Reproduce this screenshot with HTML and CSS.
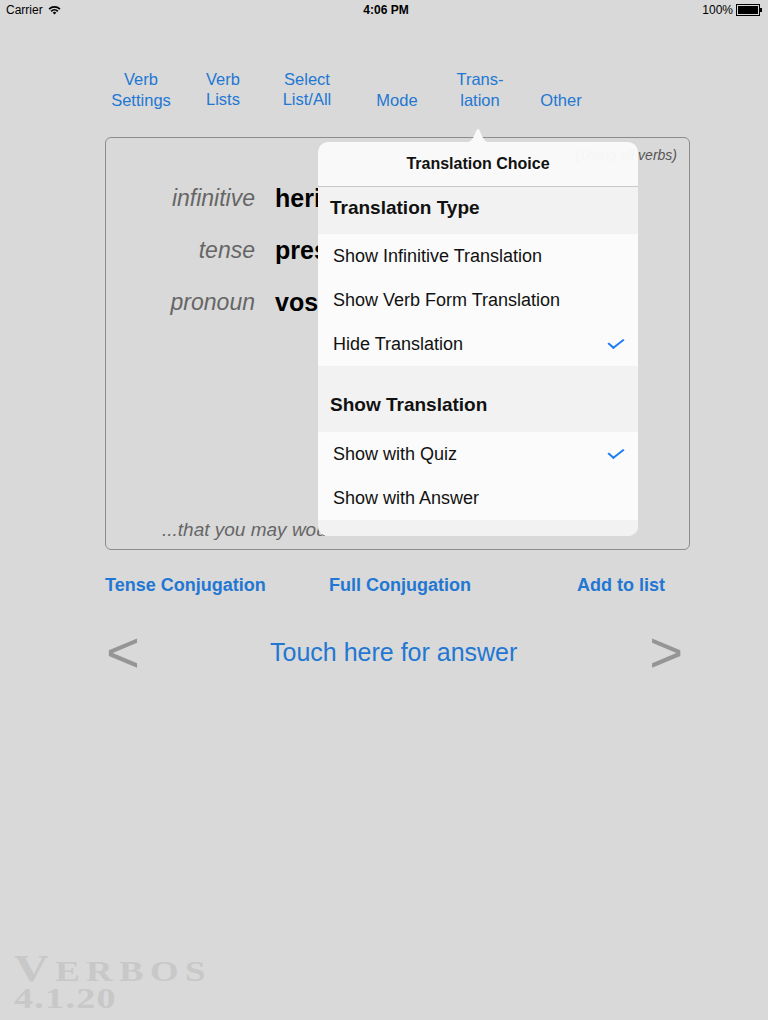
FILE: index.html
```html
<html lang="en">
<head>
    <meta charset="UTF-8">
    <meta name="viewport" content="width=device-width, initial-scale=1.0">
    <title>Verbos</title>
    <link rel="stylesheet" href="styles.css">
</head>
<body>
    <div class="screen">
        <!-- iOS status bar -->
        <div class="status-bar">
            <div class="status-left">
                Carrier
                <svg class="wifi" width="13" height="10" viewBox="0 0 13 10">
                    <path d="M0.5 3.6 A8.5 8.5 0 0 1 12.5 3.6 L11.3 4.8 A6.8 6.8 0 0 0 1.7 4.8 Z" fill="#000"/>
                    <path d="M2.6 5.7 A5.5 5.5 0 0 1 10.4 5.7 L9.2 6.9 A3.8 3.8 0 0 0 3.8 6.9 Z" fill="#000"/>
                    <path d="M4.7 7.8 A2.5 2.5 0 0 1 8.3 7.8 L6.5 9.6 Z" fill="#000"/>
                </svg>
            </div>
            <div class="status-time">4:06 PM</div>
            <div class="status-right">
                100%
                <span class="battery"><span class="battery-fill"></span></span>
                <span class="battery-tip"></span>
            </div>
        </div>

        <!-- Top menu -->
        <nav class="top-menu">
            <a class="menu-item">Verb<br>Settings</a>
            <a class="menu-item menu-item-up">Verb<br>Lists</a>
            <a class="menu-item menu-item-up">Select<br>List/All</a>
            <a class="menu-item">Mode</a>
            <a class="menu-item">Trans-<br>lation</a>
            <a class="menu-item">Other</a>
        </nav>

        <!-- Quiz card -->
        <div class="quiz-card">
            <div class="verb-scope">(Using all verbs)</div>
            <div class="quiz-grid">
                <span class="quiz-label">infinitive</span>
                <span class="quiz-value">herir</span>
                <span class="quiz-label">tense</span>
                <span class="quiz-value">presente de subjuntivo</span>
                <span class="quiz-label">pronoun</span>
                <span class="quiz-value">vosotros</span>
            </div>
            <div class="quiz-hint">...that you may wound</div>
        </div>

        <div class="action-links">
            <a class="action-link">Tense Conjugation</a>
            <a class="action-link">Full Conjugation</a>
            <a class="action-link">Add to list</a>
        </div>

        <div class="answer-row">
            <span class="nav-arrow">&lt;</span>
            <a class="answer-link">Touch here for answer</a>
            <span class="nav-arrow">&gt;</span>
        </div>

        <div class="app-logo">
            <div class="logo-name"><span class="logo-initial">V</span>ERBOS</div>
            <div class="logo-version">4.1.20</div>
        </div>

        <!-- Translation popover -->
        <div class="popover">
            <svg class="popover-arrow" width="30" height="15" viewBox="0 0 30 15">
                <path d="M0 15 C7 15 10 12 13 3 Q15 -1 17 3 C20 12 23 15 30 15 Z" fill="#f8f9f8"/>
            </svg>
            <div class="popover-title">Translation Choice</div>
            <div class="section-header">Translation Type</div>
            <div class="option-row">Show Infinitive Translation</div>
            <div class="option-row">Show Verb Form Translation</div>
            <div class="option-row">Hide Translation <span class="check"></span></div>
            <div class="section-header section-header-tall">Show Translation</div>
            <div class="option-row">Show with Quiz <span class="check"></span></div>
            <div class="option-row">Show with Answer</div>
            <div class="popover-foot"></div>
        </div>
    </div>
</body>
</html>
```

FILE: styles.css
```css
body {
    margin: 0;
    padding: 0;
    background-color: #d9d9d9;
    font-family: "Liberation Sans", Arial, sans-serif;
}

a {
    color: #2277d3;
    text-decoration: none;
}

.screen {
    position: relative;
    width: 768px;
    height: 1020px;
    display: flex;
    flex-direction: column;
    overflow: hidden;
}

/* status bar */
.status-bar {
    height: 20px;
    display: grid;
    grid-template-columns: 1fr auto 1fr;
    align-items: center;
    font-size: 12px;
    color: #000;
    padding: 0 6px;
}

.status-left {
    display: flex;
    align-items: center;
    gap: 5px;
}

.status-time {
    font-weight: bold;
    padding-left: 4px;
}

.status-right {
    display: flex;
    align-items: center;
    justify-content: flex-end;
}

.battery {
    margin-left: 3px;
    width: 20px;
    height: 8px;
    border: 1px solid #000;
    padding: 1px;
    display: inline-block;
}

.battery-fill {
    display: block;
    height: 100%;
    background: #000;
}

.battery-tip {
    width: 2px;
    height: 4px;
    background: #000;
}

/* top menu */
.top-menu {
    margin-top: 49px;
    margin-left: 100px;
    display: grid;
    grid-template-columns: 82px 82px 86px 94px 72px 90px;
    align-items: end;
}

.menu-item {
    text-align: center;
    font-size: 16.5px;
    line-height: 21px;
}

.menu-item-up {
    line-height: 20px;
    margin-bottom: 2px;
}

/* quiz card */
.quiz-card {
    margin: 26px 0 0 105px;
    width: 583px;
    height: 411px;
    border: 1px solid #8c8c8c;
    border-radius: 6px;
    display: flex;
    flex-direction: column;
}

.verb-scope {
    text-align: right;
    font-size: 14px;
    font-style: italic;
    color: #555;
    padding: 8px 12px 0 0;
    line-height: 18px;
}

.quiz-grid {
    margin-top: 8px;
    display: grid;
    grid-template-columns: 149px 1fr;
    column-gap: 20px;
    white-space: nowrap;
}

.quiz-label {
    text-align: right;
    font-size: 23px;
    font-style: italic;
    color: #666;
    line-height: 52px;
}

.quiz-value {
    font-size: 25px;
    font-weight: bold;
    color: #000;
    line-height: 52px;
}

.quiz-hint {
    margin-top: auto;
    padding: 0 0 8px 56px;
    font-size: 19px;
    font-style: italic;
    color: #666;
    line-height: 22px;
}

.action-links {
    margin: 24px 0 0 105px;
    width: 560px;
    display: grid;
    grid-template-columns: 224px 1fr auto;
}

.action-link {
    font-size: 18px;
    font-weight: bold;
    line-height: 22px;
}

.answer-row {
    margin: 26px 0 0 106px;
    width: 577px;
    display: grid;
    grid-template-columns: 164px 1fr auto;
    align-items: center;
}

.nav-arrow {
    font-size: 58px;
    line-height: 60px;
    color: #959595;
}

.answer-link {
    font-size: 25px;
    line-height: 30px;
}

/* logo */
.app-logo {
    margin-top: auto;
    padding: 0 0 10px 11px;
    color: #c8c8c8;
    font-family: "Liberation Serif", serif;
    font-weight: bold;
    transform: scaleX(1.27);
    transform-origin: left;
}

.logo-name {
    font-size: 29px;
    line-height: 30px;
    letter-spacing: 5px;
}

.logo-initial {
    font-size: 38px;
}

.logo-version {
    font-size: 30px;
    line-height: 24px;
    letter-spacing: 1px;
}

/* popover */
.popover {
    position: absolute;
    left: 318px;
    top: 142px;
    width: 320px;
    height: 394px;
    border-radius: 10px;
    background: rgba(248, 249, 248, 0.98);
    box-sizing: border-box;
}

.popover-arrow {
    position: absolute;
    left: 145px;
    top: -14px;
}

.popover-title {
    height: 44px;
    line-height: 44px;
    text-align: center;
    font-size: 16px;
    font-weight: bold;
    color: #111;
    border-bottom: 1px solid #c9c9c9;
}

.section-header {
    height: 47px;
    line-height: 42px;
    padding-left: 12px;
    font-size: 19px;
    font-weight: bold;
    color: #111;
    background: #f2f2f2;
}

.section-header-tall {
    height: 66px;
    line-height: 78px;
}

.option-row {
    height: 44px;
    line-height: 44px;
    padding: 0 15px;
    font-size: 18px;
    color: #111;
    background: #fbfbfb;
    display: flex;
    justify-content: space-between;
    align-items: center;
}

.check {
    width: 6px;
    height: 12px;
    border: solid #1a7cf5;
    border-width: 0 2.5px 2.5px 0;
    transform: rotate(42deg) skewX(-10deg);
    margin: -5px 3px 0 0;
}

.popover-foot {
    height: 16px;
    background: #f2f2f2;
    border-radius: 0 0 10px 10px;
}
```
